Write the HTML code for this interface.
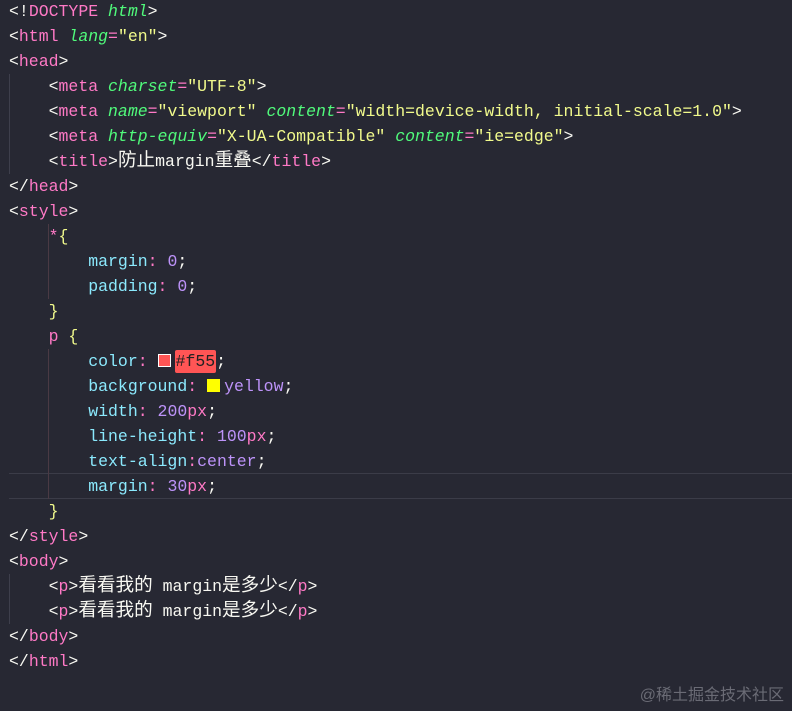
<!DOCTYPE html>
<html><head><meta charset="utf-8"><style>
body{margin:0;background:#272833;width:792px;height:711px;overflow:hidden;position:relative}
pre{margin:0;position:absolute;top:-1px;left:9px;font-family:"Liberation Mono","Noto Sans CJK SC",monospace;font-size:16.5px;line-height:25px;color:#f8f8f2}
.c{font-size:18.6px;line-height:20px;font-family:"Noto Sans CJK SC",sans-serif}
.t{color:#ff79c6}.a{color:#50fa7b;font-style:italic}.s{color:#f1fa8c}.p{color:#8be9fd}.v{color:#bd93f9}.b{color:#f1fa8c}
.g{position:absolute;width:1px;background:#3e3f4c}
.hl{position:absolute;left:9px;right:0;top:473px;height:24px;border-top:1px solid #3b3c48;border-bottom:1px solid #3b3c48}
.sw{display:inline-block;width:13px;height:13px;border:1px solid #fff;vertical-align:-1px;margin-right:4px;box-sizing:border-box}
.wm{position:absolute;right:8px;bottom:6px;color:#6a6b75;font-family:"Liberation Sans","Noto Sans CJK SC",sans-serif;font-size:16px}
</style></head><body>
<div class="hl"></div>
<div class="g" style="left:9px;top:74px;height:100px"></div>
<div class="g" style="left:48px;top:224px;height:75px;background:#4a3a44"></div>
<div class="g" style="left:48px;top:349px;height:150px;background:#4a3a44"></div>
<div class="g" style="left:9px;top:574px;height:50px"></div>
<pre>&lt;!<span class="t">DOCTYPE</span> <span class="a">html</span>&gt;
&lt;<span class="t">html</span> <span class="a">lang</span><span class="t">=</span><span class="s">"en"</span>&gt;
&lt;<span class="t">head</span>&gt;
    &lt;<span class="t">meta</span> <span class="a">charset</span><span class="t">=</span><span class="s">"UTF-8"</span>&gt;
    &lt;<span class="t">meta</span> <span class="a">name</span><span class="t">=</span><span class="s">"viewport"</span> <span class="a">content</span><span class="t">=</span><span class="s">"width=device-width, initial-scale=1.0"</span>&gt;
    &lt;<span class="t">meta</span> <span class="a">http-equiv</span><span class="t">=</span><span class="s">"X-UA-Compatible"</span> <span class="a">content</span><span class="t">=</span><span class="s">"ie=edge"</span>&gt;
    &lt;<span class="t">title</span>&gt;<span class="c">防止</span>margin<span class="c">重叠</span>&lt;/<span class="t">title</span>&gt;
&lt;/<span class="t">head</span>&gt;
&lt;<span class="t">style</span>&gt;
    <span class="t">*</span><span class="b">{</span>
        <span class="p">margin</span><span class="t">:</span> <span class="v">0</span>;
        <span class="p">padding</span><span class="t">:</span> <span class="v">0</span>;
    <span class="b">}</span>
    <span class="t">p</span> <span class="b">{</span>
        <span class="p">color</span><span class="t">:</span> <span class="sw" style="background:#f55"></span><span style="background:#f55;color:#222;border-radius:2px;padding:2px 1px">#f55</span>;
        <span class="p">background</span><span class="t">:</span> <span class="sw" style="background:#ff0;border-color:#ff0"></span><span class="v">yellow</span>;
        <span class="p">width</span><span class="t">:</span> <span class="v">200</span><span class="t">px</span>;
        <span class="p">line-height</span><span class="t">:</span> <span class="v">100</span><span class="t">px</span>;
        <span class="p">text-align</span><span class="t">:</span><span class="v">center</span>;
        <span class="p">margin</span><span class="t">:</span> <span class="v">30</span><span class="t">px</span>;
    <span class="b">}</span>
&lt;/<span class="t">style</span>&gt;
&lt;<span class="t">body</span>&gt;
    &lt;<span class="t">p</span>&gt;<span class="c">看看我的</span> margin<span class="c">是多少</span>&lt;/<span class="t">p</span>&gt;
    &lt;<span class="t">p</span>&gt;<span class="c">看看我的</span> margin<span class="c">是多少</span>&lt;/<span class="t">p</span>&gt;
&lt;/<span class="t">body</span>&gt;
&lt;/<span class="t">html</span>&gt;</pre>
<div class="wm">@稀土掘金技术社区</div>
</body></html>
